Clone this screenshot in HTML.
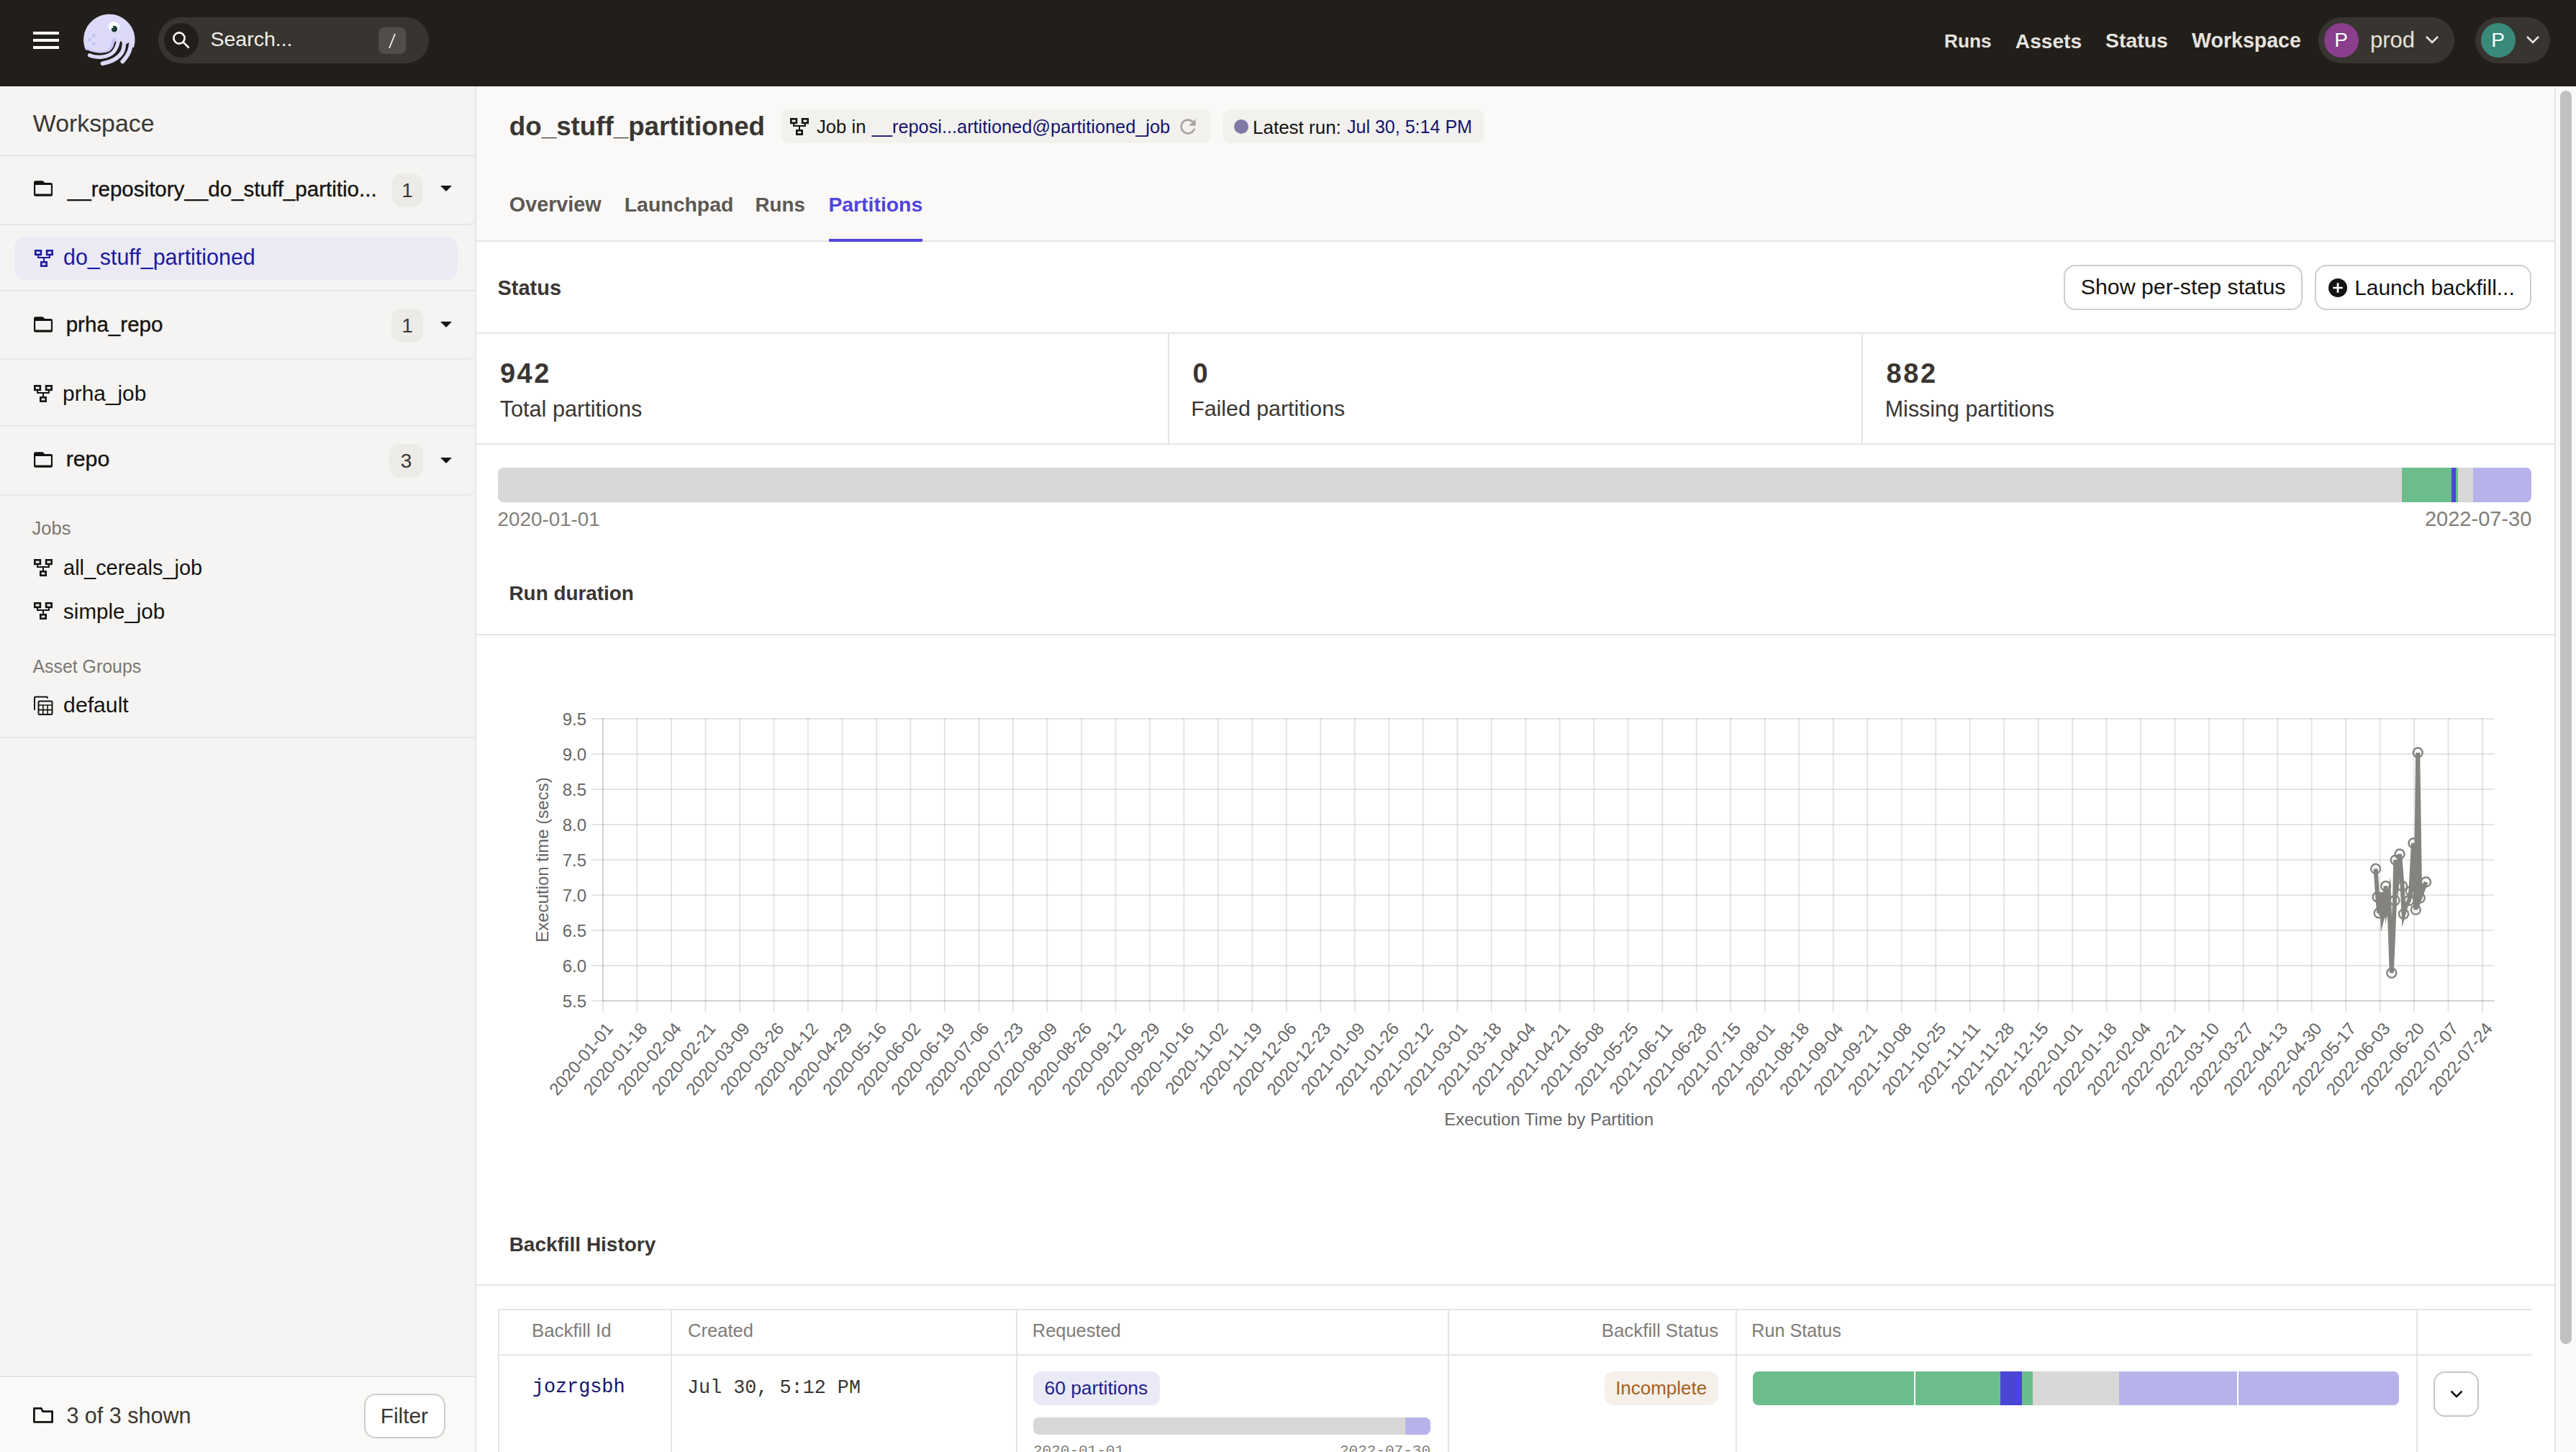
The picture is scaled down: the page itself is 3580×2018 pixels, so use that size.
<!DOCTYPE html>
<html><head><meta charset="utf-8"><title>do_stuff_partitioned</title>
<style>
html,body{margin:0;padding:0;}
body{width:3580px;height:2018px;overflow:hidden;position:relative;background:#fff;font-family:"Liberation Sans", sans-serif;}
.t{position:absolute;line-height:1;white-space:nowrap;}
.r{position:absolute;}
svg{position:absolute;overflow:visible;}
</style></head><body>
<div class="r" style="left:0px;top:0px;width:3580px;height:120px;background:#221F1B;"></div>
<div class="r" style="left:46px;top:44px;width:36px;height:4px;background:#FFFFFF;"></div>
<div class="r" style="left:46px;top:54px;width:36px;height:4px;background:#FFFFFF;"></div>
<div class="r" style="left:46px;top:64px;width:36px;height:4px;background:#FFFFFF;"></div>
<svg style="left:110px;top:14px" width="84" height="84" viewBox="0 0 84 84">
<path fill="#DCDAF8" d="M9 55.5 A35.7 35.7 0 1 1 75.9 52 L72 52 L70.4 47 A1.7 1.7 0 0 0 67 47 L61 45 L59.2 45 A1.7 1.7 0 0 0 55.8 45 L52.2 45 A1.7 1.7 0 0 0 48.8 45 C48 50, 46 55, 40.5 57.8 C33 60.5, 22 60, 11.6 55.5 Z"/>
<path fill="#C8C5F4" d="M9.6 52 C20 58.5, 34 59, 41 54 C44.5 50.5, 44.5 42, 47.5 38.8 C50 37, 52.5 39.5, 51.8 42.5 L48.8 45 C48 50, 46 55, 40.5 57.8 C33 60.5, 22 60, 11.6 55.5 Z"/>
<path d="M14.5 62.8 C24 67, 40 66, 47.5 58.5 C51 55, 53 50, 54.5 43" stroke="#DCDAF8" stroke-width="5.3" fill="none" stroke-linecap="round"/>
<path d="M32.5 74.3 C45 72, 55 66, 59.5 59 C61.5 55.5, 62.5 50, 62.8 43" stroke="#DCDAF8" stroke-width="5.6" fill="none" stroke-linecap="round"/>
<path d="M60.3 71.5 C65.5 66, 69.8 59.5, 71.2 52 C71.8 49, 72 46, 72.2 43" stroke="#DCDAF8" stroke-width="5.8" fill="none" stroke-linecap="round"/>
<ellipse cx="48.4" cy="23.1" rx="7.9" ry="6.9" fill="#FFFFFF"/>
<path fill="#1E3D3A" d="M44.6 27.5 A4.4 4.4 0 1 0 46.5 22.4 L47.6 24.6 L45.3 24.9 Z"/>
<circle cx="20.2" cy="35.3" r="2.6" fill="#C8C5F4"/><circle cx="14.7" cy="41" r="2.6" fill="#C8C5F4"/><circle cx="20.2" cy="46.8" r="2.6" fill="#C8C5F4"/>
</svg>
<div class="r" style="left:220px;top:24px;width:376px;height:64px;background:#38342F;border-radius:32px;"></div>
<div class="r" style="left:228px;top:32px;width:48px;height:48px;background:#221F1B;border-radius:24px;"></div>
<svg style="left:238px;top:42px" width="28" height="28" viewBox="0 0 28 28">
<circle cx="11" cy="11" r="7.6" stroke="#FFFFFF" stroke-width="2.6" fill="none"/>
<line x1="16.5" y1="16.5" x2="24.5" y2="24.5" stroke="#FFFFFF" stroke-width="2.6"/>
</svg>
<div class="t" id="t0" style="left:292.49px;top:39.87px;font-size:28.51px;color:#F2F0EC;font-weight:400;font-family:'Liberation Sans', sans-serif;">Search...</div>
<div class="r" style="left:526px;top:38px;width:38px;height:37px;background:#514D48;border-radius:8px;"></div>
<svg style="left:530px;top:44px" width="30" height="26" viewBox="0 0 30 26">
<line x1="19" y1="3" x2="11" y2="23" stroke="#F2F0EC" stroke-width="1.8"/></svg>
<div class="t" id="t1" style="left:2701.89px;top:44.20px;font-size:26.34px;color:#E6E3DE;font-weight:700;font-family:'Liberation Sans', sans-serif;">Runs</div>
<div class="t" id="t2" style="left:2800.80px;top:42.65px;font-size:28.17px;color:#E6E3DE;font-weight:700;font-family:'Liberation Sans', sans-serif;">Assets</div>
<div class="t" id="t3" style="left:2926.00px;top:42.43px;font-size:28.43px;color:#E6E3DE;font-weight:700;font-family:'Liberation Sans', sans-serif;">Status</div>
<div class="t" id="t4" style="left:3046.00px;top:42.32px;font-size:28.57px;color:#E6E3DE;font-weight:700;font-family:'Liberation Sans', sans-serif;">Workspace</div>
<div class="r" style="left:3222px;top:24px;width:189px;height:64px;background:#38342F;border-radius:32px;"></div>
<div class="r" style="left:3229.5px;top:32px;width:48px;height:48px;background:#8A3E8C;border-radius:24px;"></div>
<div class="t" id="t5" style="left:3253.50px;transform:translateX(-50%);top:42.30px;font-size:28.00px;color:#FFFFFF;font-weight:400;font-family:'Liberation Sans', sans-serif;">P</div>
<div class="t" id="t6" style="left:3293.97px;top:40.23px;font-size:31.03px;color:#E6E3DE;font-weight:400;font-family:'Liberation Sans', sans-serif;">prod</div>
<svg style="left:3370px;top:48px" width="20" height="16" viewBox="0 0 20 16">
<polyline points="2,3 10,11 18,3" stroke="#E6E3DE" stroke-width="2.6" fill="none"/></svg>
<div class="r" style="left:3440px;top:24px;width:104px;height:64px;background:#38342F;border-radius:32px;"></div>
<div class="r" style="left:3447.5px;top:32px;width:48px;height:48px;background:#398A7A;border-radius:24px;"></div>
<div class="t" id="t7" style="left:3471.50px;transform:translateX(-50%);top:42.30px;font-size:28.00px;color:#FFFFFF;font-weight:400;font-family:'Liberation Sans', sans-serif;">P</div>
<svg style="left:3510px;top:48px" width="20" height="16" viewBox="0 0 20 16">
<polyline points="2,3 10,11 18,3" stroke="#E6E3DE" stroke-width="2.6" fill="none"/></svg>
<div class="r" style="left:0px;top:120px;width:660px;height:1898px;background:#F5F4F2;"></div>
<div class="r" style="left:660px;top:120px;width:2px;height:1898px;background:#E6E5E3;"></div>
<div class="t" id="t8" style="left:45.80px;top:155.34px;font-size:33.86px;color:#3A3632;font-weight:400;font-family:'Liberation Sans', sans-serif;">Workspace</div>
<div class="r" style="left:0px;top:215px;width:660px;height:2px;background:#E6E5E3;"></div>
<div class="r" style="left:0px;top:217px;width:660px;height:94px;background:#F5F4F2;border-bottom-right-radius:9px;box-shadow:0 2px 0 #E6E6E5;"></div>
<svg style="left:46px;top:250px" width="28" height="24" viewBox="0 0 28 24">
<path fill-rule="evenodd" fill="#151311" d="M1 3.6 Q1 1.2 3.4 1.2 H13.4 L16.2 4 H24.6 Q27.1 4 27.1 6.5 V20.2 Q27.1 22.7 24.6 22.7 H3.4 Q1 22.7 1 20.2 Z M3.2 6.9 V19.6 H24.9 V6.9 Z"/>
</svg>
<div class="t" id="t9" style="left:93.80px;top:247.59px;font-size:29.55px;color:#151311;font-weight:400;font-family:'Liberation Sans', sans-serif;-webkit-text-stroke:0.35px #151311;">__repository__do_stuff_partitio...</div>
<div class="r" style="left:545px;top:241px;width:42px;height:47px;background:#ECEBE8;border-radius:14px;"></div>
<div class="t" id="t10" style="left:566.00px;transform:translateX(-50%);top:251.30px;font-size:28.00px;color:#3A3632;font-weight:400;font-family:'Liberation Sans', sans-serif;">1</div>
<svg style="left:612px;top:258px" width="16" height="9" viewBox="0 0 16 9"><path d="M0 0 H16 L8 8 Z" fill="#151311"/></svg>
<div class="r" style="left:20px;top:329px;width:616px;height:60px;background:#EBEAF5;border-radius:16px;"></div>
<svg style="left:48px;top:347px" width="26" height="24" viewBox="0 0 26 24">
<rect x="1.3" y="1.3" width="7.6" height="5.6" stroke="#1C1AA0" stroke-width="2.6" fill="none"/>
<rect x="17.1" y="1.3" width="7.6" height="5.6" stroke="#1C1AA0" stroke-width="2.6" fill="none"/>
<path d="M5.1 8 V10.9 H20.9 V8 M13 10.9 V16.5" stroke="#1C1AA0" stroke-width="2" fill="none"/>
<rect x="9.3" y="17.3" width="7.4" height="5.4" stroke="#1C1AA0" stroke-width="2.6" fill="none"/>
</svg>
<div class="t" id="t11" style="left:87.99px;top:342.22px;font-size:30.45px;color:#1C1AA0;font-weight:400;font-family:'Liberation Sans', sans-serif;">do_stuff_partitioned</div>
<div class="r" style="left:0px;top:403px;width:660px;height:2px;background:#E6E5E3;"></div>
<div class="r" style="left:0px;top:405px;width:660px;height:93px;background:#F5F4F2;border-bottom-right-radius:9px;box-shadow:0 2px 0 #E6E6E5;"></div>
<svg style="left:46px;top:439px" width="28" height="24" viewBox="0 0 28 24">
<path fill-rule="evenodd" fill="#151311" d="M1 3.6 Q1 1.2 3.4 1.2 H13.4 L16.2 4 H24.6 Q27.1 4 27.1 6.5 V20.2 Q27.1 22.7 24.6 22.7 H3.4 Q1 22.7 1 20.2 Z M3.2 6.9 V19.6 H24.9 V6.9 Z"/>
</svg>
<div class="t" id="t12" style="left:91.68px;top:435.97px;font-size:29.57px;color:#151311;font-weight:400;font-family:'Liberation Sans', sans-serif;-webkit-text-stroke:0.35px #151311;">prha_repo</div>
<div class="r" style="left:544px;top:429px;width:44px;height:47px;background:#ECEBE8;border-radius:14px;"></div>
<div class="t" id="t13" style="left:566.00px;transform:translateX(-50%);top:439.30px;font-size:28.00px;color:#3A3632;font-weight:400;font-family:'Liberation Sans', sans-serif;">1</div>
<svg style="left:612px;top:447px" width="16" height="9" viewBox="0 0 16 9"><path d="M0 0 H16 L8 8 Z" fill="#151311"/></svg>
<svg style="left:47px;top:535px" width="26" height="24" viewBox="0 0 26 24">
<rect x="1.3" y="1.3" width="7.6" height="5.6" stroke="#151311" stroke-width="2.6" fill="none"/>
<rect x="17.1" y="1.3" width="7.6" height="5.6" stroke="#151311" stroke-width="2.6" fill="none"/>
<path d="M5.1 8 V10.9 H20.9 V8 M13 10.9 V16.5" stroke="#151311" stroke-width="2" fill="none"/>
<rect x="9.3" y="17.3" width="7.4" height="5.4" stroke="#151311" stroke-width="2.6" fill="none"/>
</svg>
<div class="t" id="t14" style="left:87.08px;top:532.12px;font-size:29.87px;color:#151311;font-weight:400;font-family:'Liberation Sans', sans-serif;">prha_job</div>
<div class="r" style="left:0px;top:591px;width:660px;height:2px;background:#E6E5E3;"></div>
<div class="r" style="left:0px;top:593px;width:660px;height:94px;background:#F5F4F2;border-bottom-right-radius:9px;box-shadow:0 2px 0 #E6E6E5;"></div>
<svg style="left:46px;top:627px" width="28" height="24" viewBox="0 0 28 24">
<path fill-rule="evenodd" fill="#151311" d="M1 3.6 Q1 1.2 3.4 1.2 H13.4 L16.2 4 H24.6 Q27.1 4 27.1 6.5 V20.2 Q27.1 22.7 24.6 22.7 H3.4 Q1 22.7 1 20.2 Z M3.2 6.9 V19.6 H24.9 V6.9 Z"/>
</svg>
<div class="t" id="t15" style="left:91.65px;top:623.33px;font-size:30.33px;color:#151311;font-weight:400;font-family:'Liberation Sans', sans-serif;-webkit-text-stroke:0.35px #151311;">repo</div>
<div class="r" style="left:541px;top:617px;width:47px;height:47px;background:#ECEBE8;border-radius:14px;"></div>
<div class="t" id="t16" style="left:564.50px;transform:translateX(-50%);top:627.30px;font-size:28.00px;color:#3A3632;font-weight:400;font-family:'Liberation Sans', sans-serif;">3</div>
<svg style="left:612px;top:636px" width="16" height="9" viewBox="0 0 16 9"><path d="M0 0 H16 L8 8 Z" fill="#151311"/></svg>
<div class="t" id="t17" style="left:44.40px;top:722.35px;font-size:25.58px;color:#7A7671;font-weight:400;font-family:'Liberation Sans', sans-serif;">Jobs</div>
<svg style="left:47px;top:777px" width="26" height="24" viewBox="0 0 26 24">
<rect x="1.3" y="1.3" width="7.6" height="5.6" stroke="#151311" stroke-width="2.6" fill="none"/>
<rect x="17.1" y="1.3" width="7.6" height="5.6" stroke="#151311" stroke-width="2.6" fill="none"/>
<path d="M5.1 8 V10.9 H20.9 V8 M13 10.9 V16.5" stroke="#151311" stroke-width="2" fill="none"/>
<rect x="9.3" y="17.3" width="7.4" height="5.4" stroke="#151311" stroke-width="2.6" fill="none"/>
</svg>
<div class="t" id="t18" style="left:88.10px;top:774.50px;font-size:28.94px;color:#151311;font-weight:400;font-family:'Liberation Sans', sans-serif;">all_cereals_job</div>
<svg style="left:47px;top:837px" width="26" height="24" viewBox="0 0 26 24">
<rect x="1.3" y="1.3" width="7.6" height="5.6" stroke="#151311" stroke-width="2.6" fill="none"/>
<rect x="17.1" y="1.3" width="7.6" height="5.6" stroke="#151311" stroke-width="2.6" fill="none"/>
<path d="M5.1 8 V10.9 H20.9 V8 M13 10.9 V16.5" stroke="#151311" stroke-width="2" fill="none"/>
<rect x="9.3" y="17.3" width="7.4" height="5.4" stroke="#151311" stroke-width="2.6" fill="none"/>
</svg>
<div class="t" id="t19" style="left:88.10px;top:834.62px;font-size:29.51px;color:#151311;font-weight:400;font-family:'Liberation Sans', sans-serif;">simple_job</div>
<div class="t" id="t20" style="left:45.40px;top:913.92px;font-size:24.90px;color:#7A7671;font-weight:400;font-family:'Liberation Sans', sans-serif;">Asset Groups</div>
<svg style="left:46px;top:967px" width="28" height="28" viewBox="0 0 28 28">
<path d="M2 19 V3 Q2 1.5 3.5 1.5 H19 Q20 1.5 20 3" stroke="#151311" stroke-width="2" fill="none" stroke-linecap="round"/>
<rect x="7.5" y="7.5" width="19" height="18.5" rx="1.5" stroke="#151311" stroke-width="2" fill="none"/>
<path d="M7.5 13 H26.5 M7.5 19.6 H26.5 M13.8 13 V26 M20.2 13 V26" stroke="#151311" stroke-width="1.6"/>
</svg>
<div class="t" id="t21" style="left:88.10px;top:965.04px;font-size:30.20px;color:#151311;font-weight:400;font-family:'Liberation Sans', sans-serif;">default</div>
<div class="r" style="left:0px;top:1024px;width:660px;height:2px;background:#E6E5E3;"></div>
<div class="r" style="left:0px;top:1913px;width:660px;height:105px;background:#FAF9F7;"></div>
<div class="r" style="left:0px;top:1912px;width:660px;height:2px;background:#E6E5E3;"></div>
<svg style="left:46px;top:1956px" width="28" height="22" viewBox="0 0 28 22">
<path fill-rule="evenodd" fill="#151311" d="M0 1.4 Q0 0 1.4 0 H12.2 L14.4 4.2 H26.6 Q28 4.2 28 5.6 V20.4 Q28 21.8 26.6 21.8 H1.4 Q0 21.8 0 20.4 Z M2.8 2.8 V19 H25.2 V7 H12.8 L10.6 2.8 Z"/></svg>
<div class="t" id="t22" style="left:92.38px;top:1952.13px;font-size:30.56px;color:#3A3632;font-weight:400;font-family:'Liberation Sans', sans-serif;">3 of 3 shown</div>
<div class="r" style="left:506px;top:1937px;width:113px;height:62px;background:#FFFFFF;border:2px solid #CFCCC8;border-radius:16px;box-sizing:border-box;"></div>
<div class="t" id="t23" style="left:561.85px;transform:translateX(-50%);top:1952.75px;font-size:29.83px;color:#3A3632;font-weight:400;font-family:'Liberation Sans', sans-serif;">Filter</div>
<div class="r" style="left:662px;top:120px;width:2888px;height:214px;background:#FAF9F7;"></div>
<div class="r" style="left:662px;top:334px;width:2888px;height:2px;background:#E6E5E3;"></div>
<div class="t" id="t24" style="left:707.80px;top:157.89px;font-size:36.75px;color:#3A3632;font-weight:700;font-family:'Liberation Sans', sans-serif;">do_stuff_partitioned</div>
<div class="r" style="left:1086px;top:152px;width:597px;height:47px;background:#F2F1EE;border-radius:12px;"></div>
<svg style="left:1098px;top:164px" width="26" height="24" viewBox="0 0 26 24">
<rect x="1.3" y="1.3" width="7.6" height="5.6" stroke="#151311" stroke-width="2.6" fill="none"/>
<rect x="17.1" y="1.3" width="7.6" height="5.6" stroke="#151311" stroke-width="2.6" fill="none"/>
<path d="M5.1 8 V10.9 H20.9 V8 M13 10.9 V16.5" stroke="#151311" stroke-width="2" fill="none"/>
<rect x="9.3" y="17.3" width="7.4" height="5.4" stroke="#151311" stroke-width="2.6" fill="none"/>
</svg>
<div class="t" id="t25" style="left:1135.00px;top:163.80px;font-size:25.64px;color:#151311;font-weight:400;font-family:'Liberation Sans', sans-serif;">Job in</div>
<div class="t" id="t26" style="left:1211.81px;top:164.05px;font-size:25.34px;color:#13136E;font-weight:400;font-family:'Liberation Sans', sans-serif;">__reposi...artitioned@partitioned_job</div>
<svg style="left:1635px;top:160px" width="32" height="32" viewBox="0 0 24 24">
<path fill="#A7A4A0" d="M17.65 6.35C16.2 4.9 14.21 4 12 4c-4.42 0-7.99 3.58-7.99 8s3.57 8 7.99 8c3.73 0 6.84-2.55 7.73-6h-2.08c-.82 2.33-3.04 4-5.65 4-3.31 0-6-2.69-6-6s2.69-6 6-6c1.66 0 3.140.69 4.22 1.78L13 11h7V4l-2.35 2.35z"/></svg>
<div class="r" style="left:1698.6px;top:152px;width:364px;height:47px;background:#F2F1EE;border-radius:12px;"></div>
<div class="r" style="left:1715px;top:166px;width:20px;height:20px;background:#7F7BA6;border-radius:10px;"></div>
<div class="t" id="t27" style="left:1741.06px;top:163.50px;font-size:25.99px;color:#151311;font-weight:400;font-family:'Liberation Sans', sans-serif;">Latest run:</div>
<div class="t" id="t28" style="left:1872.00px;top:164.30px;font-size:25.04px;color:#13136E;font-weight:400;font-family:'Liberation Sans', sans-serif;">Jul 30, 5:14 PM</div>
<div class="t" id="t29" style="left:707.80px;top:269.64px;font-size:28.78px;color:#5C5853;font-weight:700;font-family:'Liberation Sans', sans-serif;">Overview</div>
<div class="t" id="t30" style="left:867.76px;top:269.92px;font-size:28.45px;color:#5C5853;font-weight:700;font-family:'Liberation Sans', sans-serif;">Launchpad</div>
<div class="t" id="t31" style="left:1049.57px;top:270.54px;font-size:27.71px;color:#5C5853;font-weight:700;font-family:'Liberation Sans', sans-serif;">Runs</div>
<div class="t" id="t32" style="left:1151.39px;top:269.98px;font-size:28.38px;color:#4F43DD;font-weight:700;font-family:'Liberation Sans', sans-serif;">Partitions</div>
<div class="r" style="left:1152px;top:332px;width:130px;height:4px;background:#4F43DD;"></div>
<div class="t" id="t33" style="left:691.59px;top:386.11px;font-size:28.93px;color:#3A3632;font-weight:700;font-family:'Liberation Sans', sans-serif;">Status</div>
<div class="r" style="left:2868px;top:368px;width:332px;height:63px;background:#FFFFFF;border:2px solid #CFCCC8;border-radius:16px;box-sizing:border-box;"></div>
<div class="t" id="t34" style="left:2891.79px;top:384.34px;font-size:30.31px;color:#151311;font-weight:400;font-family:'Liberation Sans', sans-serif;">Show per-step status</div>
<div class="r" style="left:3217px;top:368px;width:301px;height:63px;background:#FFFFFF;border:2px solid #CFCCC8;border-radius:16px;box-sizing:border-box;"></div>
<div class="t" id="t35" style="left:3272.16px;top:384.70px;font-size:29.89px;color:#151311;font-weight:400;font-family:'Liberation Sans', sans-serif;">Launch backfill...</div>
<svg style="left:3235px;top:386px" width="28" height="28" viewBox="0 0 28 28">
<circle cx="14" cy="14" r="13" fill="#151311"/>
<path d="M14 7.3 V20.7 M7.3 14 H20.7" stroke="#FFFFFF" stroke-width="2.7"/></svg>
<div class="r" style="left:662px;top:462px;width:2888px;height:2px;background:#E6E5E3;"></div>
<div class="t" id="t36" style="left:694.90px;top:499.83px;font-size:38.00px;color:#3A3632;font-weight:700;font-family:'Liberation Sans', sans-serif;letter-spacing:2.6px;">942</div>
<div class="t" id="t37" style="left:694.70px;top:552.75px;font-size:30.65px;color:#3A3632;font-weight:400;font-family:'Liberation Sans', sans-serif;">Total partitions</div>
<div class="t" id="t38" style="left:1657.40px;top:499.83px;font-size:38.00px;color:#3A3632;font-weight:700;font-family:'Liberation Sans', sans-serif;letter-spacing:2.6px;">0</div>
<div class="t" id="t39" style="left:1655.18px;top:553.02px;font-size:30.34px;color:#3A3632;font-weight:400;font-family:'Liberation Sans', sans-serif;">Failed partitions</div>
<div class="t" id="t40" style="left:2621.60px;top:499.83px;font-size:38.00px;color:#3A3632;font-weight:700;font-family:'Liberation Sans', sans-serif;letter-spacing:2.6px;">882</div>
<div class="t" id="t41" style="left:2619.77px;top:552.93px;font-size:30.44px;color:#3A3632;font-weight:400;font-family:'Liberation Sans', sans-serif;">Missing partitions</div>
<div class="r" style="left:1623px;top:464px;width:2px;height:152px;background:#E6E5E3;"></div>
<div class="r" style="left:2587px;top:464px;width:2px;height:152px;background:#E6E5E3;"></div>
<div class="r" style="left:662px;top:616px;width:2888px;height:2px;background:#E6E5E3;"></div>
<div class="r" style="left:692px;top:650px;width:2826px;height:48px;border-radius:8px;overflow:hidden;background:#D9D8D6;">
<div class="r" style="left:2645.7px;top:0;width:69.3px;height:48px;background:#6BBE8C"></div>
<div class="r" style="left:2715px;top:0;width:6px;height:48px;background:#4B45D6"></div>
<div class="r" style="left:2721px;top:0;width:3px;height:48px;background:#6BBE8C"></div>
<div class="r" style="left:2745px;top:0;width:81px;height:48px;background:#B7B3EA"></div>
</div>
<div class="t" id="t42" style="left:691.60px;top:707.97px;font-size:27.80px;color:#827E79;font-weight:400;font-family:'Liberation Sans', sans-serif;">2020-01-01</div>
<div class="t" id="t43" style="right:61.74px;top:706.96px;font-size:28.99px;color:#827E79;font-weight:400;font-family:'Liberation Sans', sans-serif;">2022-07-30</div>
<div class="t" id="t44" style="left:707.48px;top:811.39px;font-size:27.89px;color:#3A3632;font-weight:700;font-family:'Liberation Sans', sans-serif;">Run duration</div>
<div class="r" style="left:662px;top:881px;width:2888px;height:2px;background:#E6E5E3;"></div>
<svg style="left:0px;top:0px" width="3580" height="2018" viewBox="0 0 3580 2018">
<rect x="822" y="998.0" width="2644.8" height="2" fill="rgba(0,0,0,0.1)"/>
<rect x="822" y="1047.0" width="2644.8" height="2" fill="rgba(0,0,0,0.1)"/>
<rect x="822" y="1096.0" width="2644.8" height="2" fill="rgba(0,0,0,0.1)"/>
<rect x="822" y="1145.0" width="2644.8" height="2" fill="rgba(0,0,0,0.1)"/>
<rect x="822" y="1194.0" width="2644.8" height="2" fill="rgba(0,0,0,0.1)"/>
<rect x="822" y="1243.0" width="2644.8" height="2" fill="rgba(0,0,0,0.1)"/>
<rect x="822" y="1292.0" width="2644.8" height="2" fill="rgba(0,0,0,0.1)"/>
<rect x="822" y="1341.0" width="2644.8" height="2" fill="rgba(0,0,0,0.1)"/>
<rect x="822" y="1390.0" width="2644.8" height="2" fill="rgba(0,0,0,0.1)"/>
<rect x="837.0" y="998.0" width="2" height="409.0" fill="rgba(0,0,0,0.1)"/>
<rect x="884.5" y="998.0" width="2" height="409.0" fill="rgba(0,0,0,0.1)"/>
<rect x="932.0" y="998.0" width="2" height="409.0" fill="rgba(0,0,0,0.1)"/>
<rect x="979.5" y="998.0" width="2" height="409.0" fill="rgba(0,0,0,0.1)"/>
<rect x="1027.0" y="998.0" width="2" height="409.0" fill="rgba(0,0,0,0.1)"/>
<rect x="1074.5" y="998.0" width="2" height="409.0" fill="rgba(0,0,0,0.1)"/>
<rect x="1121.9" y="998.0" width="2" height="409.0" fill="rgba(0,0,0,0.1)"/>
<rect x="1169.4" y="998.0" width="2" height="409.0" fill="rgba(0,0,0,0.1)"/>
<rect x="1216.9" y="998.0" width="2" height="409.0" fill="rgba(0,0,0,0.1)"/>
<rect x="1264.4" y="998.0" width="2" height="409.0" fill="rgba(0,0,0,0.1)"/>
<rect x="1311.9" y="998.0" width="2" height="409.0" fill="rgba(0,0,0,0.1)"/>
<rect x="1359.4" y="998.0" width="2" height="409.0" fill="rgba(0,0,0,0.1)"/>
<rect x="1406.9" y="998.0" width="2" height="409.0" fill="rgba(0,0,0,0.1)"/>
<rect x="1454.4" y="998.0" width="2" height="409.0" fill="rgba(0,0,0,0.1)"/>
<rect x="1501.9" y="998.0" width="2" height="409.0" fill="rgba(0,0,0,0.1)"/>
<rect x="1549.4" y="998.0" width="2" height="409.0" fill="rgba(0,0,0,0.1)"/>
<rect x="1596.9" y="998.0" width="2" height="409.0" fill="rgba(0,0,0,0.1)"/>
<rect x="1644.4" y="998.0" width="2" height="409.0" fill="rgba(0,0,0,0.1)"/>
<rect x="1691.8" y="998.0" width="2" height="409.0" fill="rgba(0,0,0,0.1)"/>
<rect x="1739.3" y="998.0" width="2" height="409.0" fill="rgba(0,0,0,0.1)"/>
<rect x="1786.8" y="998.0" width="2" height="409.0" fill="rgba(0,0,0,0.1)"/>
<rect x="1834.3" y="998.0" width="2" height="409.0" fill="rgba(0,0,0,0.1)"/>
<rect x="1881.8" y="998.0" width="2" height="409.0" fill="rgba(0,0,0,0.1)"/>
<rect x="1929.3" y="998.0" width="2" height="409.0" fill="rgba(0,0,0,0.1)"/>
<rect x="1976.8" y="998.0" width="2" height="409.0" fill="rgba(0,0,0,0.1)"/>
<rect x="2024.3" y="998.0" width="2" height="409.0" fill="rgba(0,0,0,0.1)"/>
<rect x="2071.8" y="998.0" width="2" height="409.0" fill="rgba(0,0,0,0.1)"/>
<rect x="2119.3" y="998.0" width="2" height="409.0" fill="rgba(0,0,0,0.1)"/>
<rect x="2166.8" y="998.0" width="2" height="409.0" fill="rgba(0,0,0,0.1)"/>
<rect x="2214.3" y="998.0" width="2" height="409.0" fill="rgba(0,0,0,0.1)"/>
<rect x="2261.7" y="998.0" width="2" height="409.0" fill="rgba(0,0,0,0.1)"/>
<rect x="2309.2" y="998.0" width="2" height="409.0" fill="rgba(0,0,0,0.1)"/>
<rect x="2356.7" y="998.0" width="2" height="409.0" fill="rgba(0,0,0,0.1)"/>
<rect x="2404.2" y="998.0" width="2" height="409.0" fill="rgba(0,0,0,0.1)"/>
<rect x="2451.7" y="998.0" width="2" height="409.0" fill="rgba(0,0,0,0.1)"/>
<rect x="2499.2" y="998.0" width="2" height="409.0" fill="rgba(0,0,0,0.1)"/>
<rect x="2546.7" y="998.0" width="2" height="409.0" fill="rgba(0,0,0,0.1)"/>
<rect x="2594.2" y="998.0" width="2" height="409.0" fill="rgba(0,0,0,0.1)"/>
<rect x="2641.7" y="998.0" width="2" height="409.0" fill="rgba(0,0,0,0.1)"/>
<rect x="2689.2" y="998.0" width="2" height="409.0" fill="rgba(0,0,0,0.1)"/>
<rect x="2736.7" y="998.0" width="2" height="409.0" fill="rgba(0,0,0,0.1)"/>
<rect x="2784.2" y="998.0" width="2" height="409.0" fill="rgba(0,0,0,0.1)"/>
<rect x="2831.6" y="998.0" width="2" height="409.0" fill="rgba(0,0,0,0.1)"/>
<rect x="2879.1" y="998.0" width="2" height="409.0" fill="rgba(0,0,0,0.1)"/>
<rect x="2926.6" y="998.0" width="2" height="409.0" fill="rgba(0,0,0,0.1)"/>
<rect x="2974.1" y="998.0" width="2" height="409.0" fill="rgba(0,0,0,0.1)"/>
<rect x="3021.6" y="998.0" width="2" height="409.0" fill="rgba(0,0,0,0.1)"/>
<rect x="3069.1" y="998.0" width="2" height="409.0" fill="rgba(0,0,0,0.1)"/>
<rect x="3116.6" y="998.0" width="2" height="409.0" fill="rgba(0,0,0,0.1)"/>
<rect x="3164.1" y="998.0" width="2" height="409.0" fill="rgba(0,0,0,0.1)"/>
<rect x="3211.6" y="998.0" width="2" height="409.0" fill="rgba(0,0,0,0.1)"/>
<rect x="3259.1" y="998.0" width="2" height="409.0" fill="rgba(0,0,0,0.1)"/>
<rect x="3306.6" y="998.0" width="2" height="409.0" fill="rgba(0,0,0,0.1)"/>
<rect x="3354.1" y="998.0" width="2" height="409.0" fill="rgba(0,0,0,0.1)"/>
<rect x="3401.5" y="998.0" width="2" height="409.0" fill="rgba(0,0,0,0.1)"/>
<rect x="3449.0" y="998.0" width="2" height="409.0" fill="rgba(0,0,0,0.1)"/>
<rect x="837.0" y="1390.0" width="2629.8" height="2" fill="rgba(0,0,0,0.08)"/>
<rect x="837.0" y="998.0" width="2" height="394.0" fill="rgba(0,0,0,0.08)"/>
<text x="815" y="1007.6" text-anchor="end" font-family="Liberation Sans" font-size="24" fill="#666666">9.5</text>
<text x="815" y="1056.6" text-anchor="end" font-family="Liberation Sans" font-size="24" fill="#666666">9.0</text>
<text x="815" y="1105.6" text-anchor="end" font-family="Liberation Sans" font-size="24" fill="#666666">8.5</text>
<text x="815" y="1154.6" text-anchor="end" font-family="Liberation Sans" font-size="24" fill="#666666">8.0</text>
<text x="815" y="1203.6" text-anchor="end" font-family="Liberation Sans" font-size="24" fill="#666666">7.5</text>
<text x="815" y="1252.6" text-anchor="end" font-family="Liberation Sans" font-size="24" fill="#666666">7.0</text>
<text x="815" y="1301.6" text-anchor="end" font-family="Liberation Sans" font-size="24" fill="#666666">6.5</text>
<text x="815" y="1350.6" text-anchor="end" font-family="Liberation Sans" font-size="24" fill="#666666">6.0</text>
<text x="815" y="1399.6" text-anchor="end" font-family="Liberation Sans" font-size="24" fill="#666666">5.5</text>
<text transform="translate(846.8,1424.5) rotate(-50)" x="0" y="8.6" text-anchor="end" font-family="Liberation Sans" font-size="24" fill="#666666">2020-01-01</text>
<text transform="translate(894.3,1424.5) rotate(-50)" x="0" y="8.6" text-anchor="end" font-family="Liberation Sans" font-size="24" fill="#666666">2020-01-18</text>
<text transform="translate(941.8,1424.5) rotate(-50)" x="0" y="8.6" text-anchor="end" font-family="Liberation Sans" font-size="24" fill="#666666">2020-02-04</text>
<text transform="translate(989.3,1424.5) rotate(-50)" x="0" y="8.6" text-anchor="end" font-family="Liberation Sans" font-size="24" fill="#666666">2020-02-21</text>
<text transform="translate(1036.8,1424.5) rotate(-50)" x="0" y="8.6" text-anchor="end" font-family="Liberation Sans" font-size="24" fill="#666666">2020-03-09</text>
<text transform="translate(1084.3,1424.5) rotate(-50)" x="0" y="8.6" text-anchor="end" font-family="Liberation Sans" font-size="24" fill="#666666">2020-03-26</text>
<text transform="translate(1131.7,1424.5) rotate(-50)" x="0" y="8.6" text-anchor="end" font-family="Liberation Sans" font-size="24" fill="#666666">2020-04-12</text>
<text transform="translate(1179.2,1424.5) rotate(-50)" x="0" y="8.6" text-anchor="end" font-family="Liberation Sans" font-size="24" fill="#666666">2020-04-29</text>
<text transform="translate(1226.7,1424.5) rotate(-50)" x="0" y="8.6" text-anchor="end" font-family="Liberation Sans" font-size="24" fill="#666666">2020-05-16</text>
<text transform="translate(1274.2,1424.5) rotate(-50)" x="0" y="8.6" text-anchor="end" font-family="Liberation Sans" font-size="24" fill="#666666">2020-06-02</text>
<text transform="translate(1321.7,1424.5) rotate(-50)" x="0" y="8.6" text-anchor="end" font-family="Liberation Sans" font-size="24" fill="#666666">2020-06-19</text>
<text transform="translate(1369.2,1424.5) rotate(-50)" x="0" y="8.6" text-anchor="end" font-family="Liberation Sans" font-size="24" fill="#666666">2020-07-06</text>
<text transform="translate(1416.7,1424.5) rotate(-50)" x="0" y="8.6" text-anchor="end" font-family="Liberation Sans" font-size="24" fill="#666666">2020-07-23</text>
<text transform="translate(1464.2,1424.5) rotate(-50)" x="0" y="8.6" text-anchor="end" font-family="Liberation Sans" font-size="24" fill="#666666">2020-08-09</text>
<text transform="translate(1511.7,1424.5) rotate(-50)" x="0" y="8.6" text-anchor="end" font-family="Liberation Sans" font-size="24" fill="#666666">2020-08-26</text>
<text transform="translate(1559.2,1424.5) rotate(-50)" x="0" y="8.6" text-anchor="end" font-family="Liberation Sans" font-size="24" fill="#666666">2020-09-12</text>
<text transform="translate(1606.7,1424.5) rotate(-50)" x="0" y="8.6" text-anchor="end" font-family="Liberation Sans" font-size="24" fill="#666666">2020-09-29</text>
<text transform="translate(1654.2,1424.5) rotate(-50)" x="0" y="8.6" text-anchor="end" font-family="Liberation Sans" font-size="24" fill="#666666">2020-10-16</text>
<text transform="translate(1701.6,1424.5) rotate(-50)" x="0" y="8.6" text-anchor="end" font-family="Liberation Sans" font-size="24" fill="#666666">2020-11-02</text>
<text transform="translate(1749.1,1424.5) rotate(-50)" x="0" y="8.6" text-anchor="end" font-family="Liberation Sans" font-size="24" fill="#666666">2020-11-19</text>
<text transform="translate(1796.6,1424.5) rotate(-50)" x="0" y="8.6" text-anchor="end" font-family="Liberation Sans" font-size="24" fill="#666666">2020-12-06</text>
<text transform="translate(1844.1,1424.5) rotate(-50)" x="0" y="8.6" text-anchor="end" font-family="Liberation Sans" font-size="24" fill="#666666">2020-12-23</text>
<text transform="translate(1891.6,1424.5) rotate(-50)" x="0" y="8.6" text-anchor="end" font-family="Liberation Sans" font-size="24" fill="#666666">2021-01-09</text>
<text transform="translate(1939.1,1424.5) rotate(-50)" x="0" y="8.6" text-anchor="end" font-family="Liberation Sans" font-size="24" fill="#666666">2021-01-26</text>
<text transform="translate(1986.6,1424.5) rotate(-50)" x="0" y="8.6" text-anchor="end" font-family="Liberation Sans" font-size="24" fill="#666666">2021-02-12</text>
<text transform="translate(2034.1,1424.5) rotate(-50)" x="0" y="8.6" text-anchor="end" font-family="Liberation Sans" font-size="24" fill="#666666">2021-03-01</text>
<text transform="translate(2081.6,1424.5) rotate(-50)" x="0" y="8.6" text-anchor="end" font-family="Liberation Sans" font-size="24" fill="#666666">2021-03-18</text>
<text transform="translate(2129.1,1424.5) rotate(-50)" x="0" y="8.6" text-anchor="end" font-family="Liberation Sans" font-size="24" fill="#666666">2021-04-04</text>
<text transform="translate(2176.6,1424.5) rotate(-50)" x="0" y="8.6" text-anchor="end" font-family="Liberation Sans" font-size="24" fill="#666666">2021-04-21</text>
<text transform="translate(2224.1,1424.5) rotate(-50)" x="0" y="8.6" text-anchor="end" font-family="Liberation Sans" font-size="24" fill="#666666">2021-05-08</text>
<text transform="translate(2271.5,1424.5) rotate(-50)" x="0" y="8.6" text-anchor="end" font-family="Liberation Sans" font-size="24" fill="#666666">2021-05-25</text>
<text transform="translate(2319.0,1424.5) rotate(-50)" x="0" y="8.6" text-anchor="end" font-family="Liberation Sans" font-size="24" fill="#666666">2021-06-11</text>
<text transform="translate(2366.5,1424.5) rotate(-50)" x="0" y="8.6" text-anchor="end" font-family="Liberation Sans" font-size="24" fill="#666666">2021-06-28</text>
<text transform="translate(2414.0,1424.5) rotate(-50)" x="0" y="8.6" text-anchor="end" font-family="Liberation Sans" font-size="24" fill="#666666">2021-07-15</text>
<text transform="translate(2461.5,1424.5) rotate(-50)" x="0" y="8.6" text-anchor="end" font-family="Liberation Sans" font-size="24" fill="#666666">2021-08-01</text>
<text transform="translate(2509.0,1424.5) rotate(-50)" x="0" y="8.6" text-anchor="end" font-family="Liberation Sans" font-size="24" fill="#666666">2021-08-18</text>
<text transform="translate(2556.5,1424.5) rotate(-50)" x="0" y="8.6" text-anchor="end" font-family="Liberation Sans" font-size="24" fill="#666666">2021-09-04</text>
<text transform="translate(2604.0,1424.5) rotate(-50)" x="0" y="8.6" text-anchor="end" font-family="Liberation Sans" font-size="24" fill="#666666">2021-09-21</text>
<text transform="translate(2651.5,1424.5) rotate(-50)" x="0" y="8.6" text-anchor="end" font-family="Liberation Sans" font-size="24" fill="#666666">2021-10-08</text>
<text transform="translate(2699.0,1424.5) rotate(-50)" x="0" y="8.6" text-anchor="end" font-family="Liberation Sans" font-size="24" fill="#666666">2021-10-25</text>
<text transform="translate(2746.5,1424.5) rotate(-50)" x="0" y="8.6" text-anchor="end" font-family="Liberation Sans" font-size="24" fill="#666666">2021-11-11</text>
<text transform="translate(2794.0,1424.5) rotate(-50)" x="0" y="8.6" text-anchor="end" font-family="Liberation Sans" font-size="24" fill="#666666">2021-11-28</text>
<text transform="translate(2841.4,1424.5) rotate(-50)" x="0" y="8.6" text-anchor="end" font-family="Liberation Sans" font-size="24" fill="#666666">2021-12-15</text>
<text transform="translate(2888.9,1424.5) rotate(-50)" x="0" y="8.6" text-anchor="end" font-family="Liberation Sans" font-size="24" fill="#666666">2022-01-01</text>
<text transform="translate(2936.4,1424.5) rotate(-50)" x="0" y="8.6" text-anchor="end" font-family="Liberation Sans" font-size="24" fill="#666666">2022-01-18</text>
<text transform="translate(2983.9,1424.5) rotate(-50)" x="0" y="8.6" text-anchor="end" font-family="Liberation Sans" font-size="24" fill="#666666">2022-02-04</text>
<text transform="translate(3031.4,1424.5) rotate(-50)" x="0" y="8.6" text-anchor="end" font-family="Liberation Sans" font-size="24" fill="#666666">2022-02-21</text>
<text transform="translate(3078.9,1424.5) rotate(-50)" x="0" y="8.6" text-anchor="end" font-family="Liberation Sans" font-size="24" fill="#666666">2022-03-10</text>
<text transform="translate(3126.4,1424.5) rotate(-50)" x="0" y="8.6" text-anchor="end" font-family="Liberation Sans" font-size="24" fill="#666666">2022-03-27</text>
<text transform="translate(3173.9,1424.5) rotate(-50)" x="0" y="8.6" text-anchor="end" font-family="Liberation Sans" font-size="24" fill="#666666">2022-04-13</text>
<text transform="translate(3221.4,1424.5) rotate(-50)" x="0" y="8.6" text-anchor="end" font-family="Liberation Sans" font-size="24" fill="#666666">2022-04-30</text>
<text transform="translate(3268.9,1424.5) rotate(-50)" x="0" y="8.6" text-anchor="end" font-family="Liberation Sans" font-size="24" fill="#666666">2022-05-17</text>
<text transform="translate(3316.4,1424.5) rotate(-50)" x="0" y="8.6" text-anchor="end" font-family="Liberation Sans" font-size="24" fill="#666666">2022-06-03</text>
<text transform="translate(3363.9,1424.5) rotate(-50)" x="0" y="8.6" text-anchor="end" font-family="Liberation Sans" font-size="24" fill="#666666">2022-06-20</text>
<text transform="translate(3411.3,1424.5) rotate(-50)" x="0" y="8.6" text-anchor="end" font-family="Liberation Sans" font-size="24" fill="#666666">2022-07-07</text>
<text transform="translate(3458.8,1424.5) rotate(-50)" x="0" y="8.6" text-anchor="end" font-family="Liberation Sans" font-size="24" fill="#666666">2022-07-24</text>
<text transform="translate(762,1195) rotate(-90)" x="0" y="0" text-anchor="middle" font-family="Liberation Sans" font-size="24" fill="#666666">Execution time (secs)</text>
<text x="2152.6" y="1564.2" text-anchor="middle" font-family="Liberation Sans" font-size="24" fill="#666666">Execution Time by Partition</text>
<polyline points="3301.6,1207.4 3304.1,1246.8 3306.2,1269.0 3309.0,1240.0 3311.0,1275.0 3312.8,1267.9 3315.6,1231.5 3317.0,1260.0 3320.0,1245.0 3323.8,1352.2 3328.0,1251.5 3329.2,1195.2 3332.0,1220.0 3335.0,1187.0 3338.6,1231.5 3340.5,1270.2 3344.0,1258.0 3348.0,1251.5 3350.3,1238.6 3354.0,1171.8 3357.3,1264.4 3360.2,1046.0 3363.2,1248.0 3371.4,1225.7" fill="none" stroke="#85837F" stroke-width="6" stroke-linejoin="miter" stroke-miterlimit="10"/>
<circle cx="3301.6" cy="1207.4" r="6.5" fill="none" stroke="#85837F" stroke-width="2.4"/>
<circle cx="3304.1" cy="1246.8" r="6.5" fill="none" stroke="#85837F" stroke-width="2.4"/>
<circle cx="3306.2" cy="1269" r="6.5" fill="none" stroke="#85837F" stroke-width="2.4"/>
<circle cx="3312.8" cy="1267.9" r="6.5" fill="none" stroke="#85837F" stroke-width="2.4"/>
<circle cx="3315.6" cy="1231.5" r="6.5" fill="none" stroke="#85837F" stroke-width="2.4"/>
<circle cx="3323.8" cy="1352.2" r="6.5" fill="none" stroke="#85837F" stroke-width="2.4"/>
<circle cx="3328" cy="1251.5" r="6.5" fill="none" stroke="#85837F" stroke-width="2.4"/>
<circle cx="3329.2" cy="1195.2" r="6.5" fill="none" stroke="#85837F" stroke-width="2.4"/>
<circle cx="3335" cy="1187" r="6.5" fill="none" stroke="#85837F" stroke-width="2.4"/>
<circle cx="3338.6" cy="1231.5" r="6.5" fill="none" stroke="#85837F" stroke-width="2.4"/>
<circle cx="3340.5" cy="1270.2" r="6.5" fill="none" stroke="#85837F" stroke-width="2.4"/>
<circle cx="3348" cy="1251.5" r="6.5" fill="none" stroke="#85837F" stroke-width="2.4"/>
<circle cx="3350.3" cy="1238.6" r="6.5" fill="none" stroke="#85837F" stroke-width="2.4"/>
<circle cx="3354" cy="1171.8" r="6.5" fill="none" stroke="#85837F" stroke-width="2.4"/>
<circle cx="3357.3" cy="1264.4" r="6.5" fill="none" stroke="#85837F" stroke-width="2.4"/>
<circle cx="3360.2" cy="1046" r="6.5" fill="none" stroke="#85837F" stroke-width="2.4"/>
<circle cx="3363.2" cy="1248" r="6.5" fill="none" stroke="#85837F" stroke-width="2.4"/>
<circle cx="3371.4" cy="1225.7" r="6.5" fill="none" stroke="#85837F" stroke-width="2.4"/>
</svg>
<div class="t" id="t45" style="left:707.69px;top:1716.33px;font-size:27.96px;color:#3A3632;font-weight:700;font-family:'Liberation Sans', sans-serif;">Backfill History</div>
<div class="r" style="left:662px;top:1785px;width:2888px;height:2px;background:#E6E5E3;"></div>
<div class="r" style="left:692px;top:1819px;width:2826px;height:2px;background:#E6E5E3;"></div>
<div class="r" style="left:692px;top:1881.7px;width:2826px;height:2px;background:#E6E5E3;"></div>
<div class="r" style="left:692px;top:1819px;width:2px;height:199px;background:#E6E5E3;"></div>
<div class="r" style="left:931.5px;top:1819px;width:2px;height:199px;background:#E6E5E3;"></div>
<div class="r" style="left:1411.6px;top:1819px;width:2px;height:199px;background:#E6E5E3;"></div>
<div class="r" style="left:2012px;top:1819px;width:2px;height:199px;background:#E6E5E3;"></div>
<div class="r" style="left:2412px;top:1819px;width:2px;height:199px;background:#E6E5E3;"></div>
<div class="r" style="left:3358px;top:1819px;width:2px;height:199px;background:#E6E5E3;"></div>
<div class="t" id="t46" style="left:739.06px;top:1836.74px;font-size:25.82px;color:#807C77;font-weight:400;font-family:'Liberation Sans', sans-serif;">Backfill Id</div>
<div class="t" id="t47" style="left:956.07px;top:1836.96px;font-size:25.56px;color:#807C77;font-weight:400;font-family:'Liberation Sans', sans-serif;">Created</div>
<div class="t" id="t48" style="left:1434.86px;top:1837.09px;font-size:25.41px;color:#807C77;font-weight:400;font-family:'Liberation Sans', sans-serif;">Requested</div>
<div class="t" id="t49" style="right:1191.89px;top:1836.71px;font-size:25.86px;color:#807C77;font-weight:400;font-family:'Liberation Sans', sans-serif;">Backfill Status</div>
<div class="t" id="t50" style="left:2434.36px;top:1837.31px;font-size:25.15px;color:#807C77;font-weight:400;font-family:'Liberation Sans', sans-serif;">Run Status</div>
<div class="t" id="t51" style="left:739.87px;top:1915.45px;font-size:26.81px;color:#13136E;font-weight:400;font-family:'Liberation Mono', monospace;">jozrgsbh</div>
<div class="t" id="t52" style="left:955.07px;top:1915.98px;font-size:26.77px;color:#3A3632;font-weight:400;font-family:'Liberation Mono', monospace;">Jul 30, 5:12 PM</div>
<div class="r" style="left:1436px;top:1906px;width:176px;height:47px;background:#EAE9F6;border-radius:12px;"></div>
<div class="t" id="t53" style="left:1451.60px;top:1916.19px;font-size:26.35px;color:#1E1C90;font-weight:400;font-family:'Liberation Sans', sans-serif;">60 partitions</div>
<div class="r" style="left:1436px;top:1970px;width:552px;height:24px;border-radius:8px;overflow:hidden;background:#D9D8D6;">
<div class="r" style="left:517px;top:0;width:35px;height:24px;background:#B7B3EA"></div></div>
<div class="t" id="t54" style="left:1436.00px;top:2005.60px;font-size:21.00px;color:#827E79;font-weight:400;font-family:'Liberation Mono', monospace;">2020-01-01</div>
<div class="t" id="t55" style="right:1592.00px;top:2005.60px;font-size:21.00px;color:#827E79;font-weight:400;font-family:'Liberation Mono', monospace;">2022-07-30</div>
<div class="r" style="left:2230px;top:1906px;width:158px;height:47px;background:#F6F0EA;border-radius:12px;"></div>
<div class="t" id="t56" style="left:2245.16px;top:1916.52px;font-size:25.96px;color:#A4601C;font-weight:400;font-family:'Liberation Sans', sans-serif;">Incomplete</div>
<div class="r" style="left:2436px;top:1906px;width:898px;height:47px;border-radius:8px;overflow:hidden;background:#D9D8D6;">
<div class="r" style="left:0;top:0;width:344px;height:47px;background:#6BBE8C"></div>
<div class="r" style="left:224px;top:0;width:2px;height:47px;background:#FFFFFF"></div>
<div class="r" style="left:344px;top:0;width:30px;height:47px;background:#4B45D6"></div>
<div class="r" style="left:374px;top:0;width:15px;height:47px;background:#6BBE8C"></div>
<div class="r" style="left:509px;top:0;width:389px;height:47px;background:#B7B3EA"></div>
<div class="r" style="left:673px;top:0;width:2px;height:47px;background:#FFFFFF"></div>
</div>
<div class="r" style="left:3382px;top:1906px;width:63px;height:63px;background:#FFFFFF;border:2px solid #C9C6C2;border-radius:16px;box-sizing:border-box;"></div>
<svg style="left:3404px;top:1930px" width="20" height="16" viewBox="0 0 20 16">
<polyline points="2.5,3.5 10,11 17.5,3.5" stroke="#151311" stroke-width="2.6" fill="none"/></svg>
<div class="r" style="left:3550px;top:120px;width:30px;height:1898px;background:#FAFAFA;"></div>
<div class="r" style="left:3550px;top:120px;width:2px;height:1898px;background:#E8E8E8;"></div>
<div class="r" style="left:3558px;top:126px;width:16px;height:1742px;background:#C1C1C1;border-radius:8px;"></div>
<script>(function(){var w=window.innerWidth;if(w>0&&Math.abs(w-3580)>4){document.documentElement.style.zoom=(w/3580);}})();</script>
</body></html>
